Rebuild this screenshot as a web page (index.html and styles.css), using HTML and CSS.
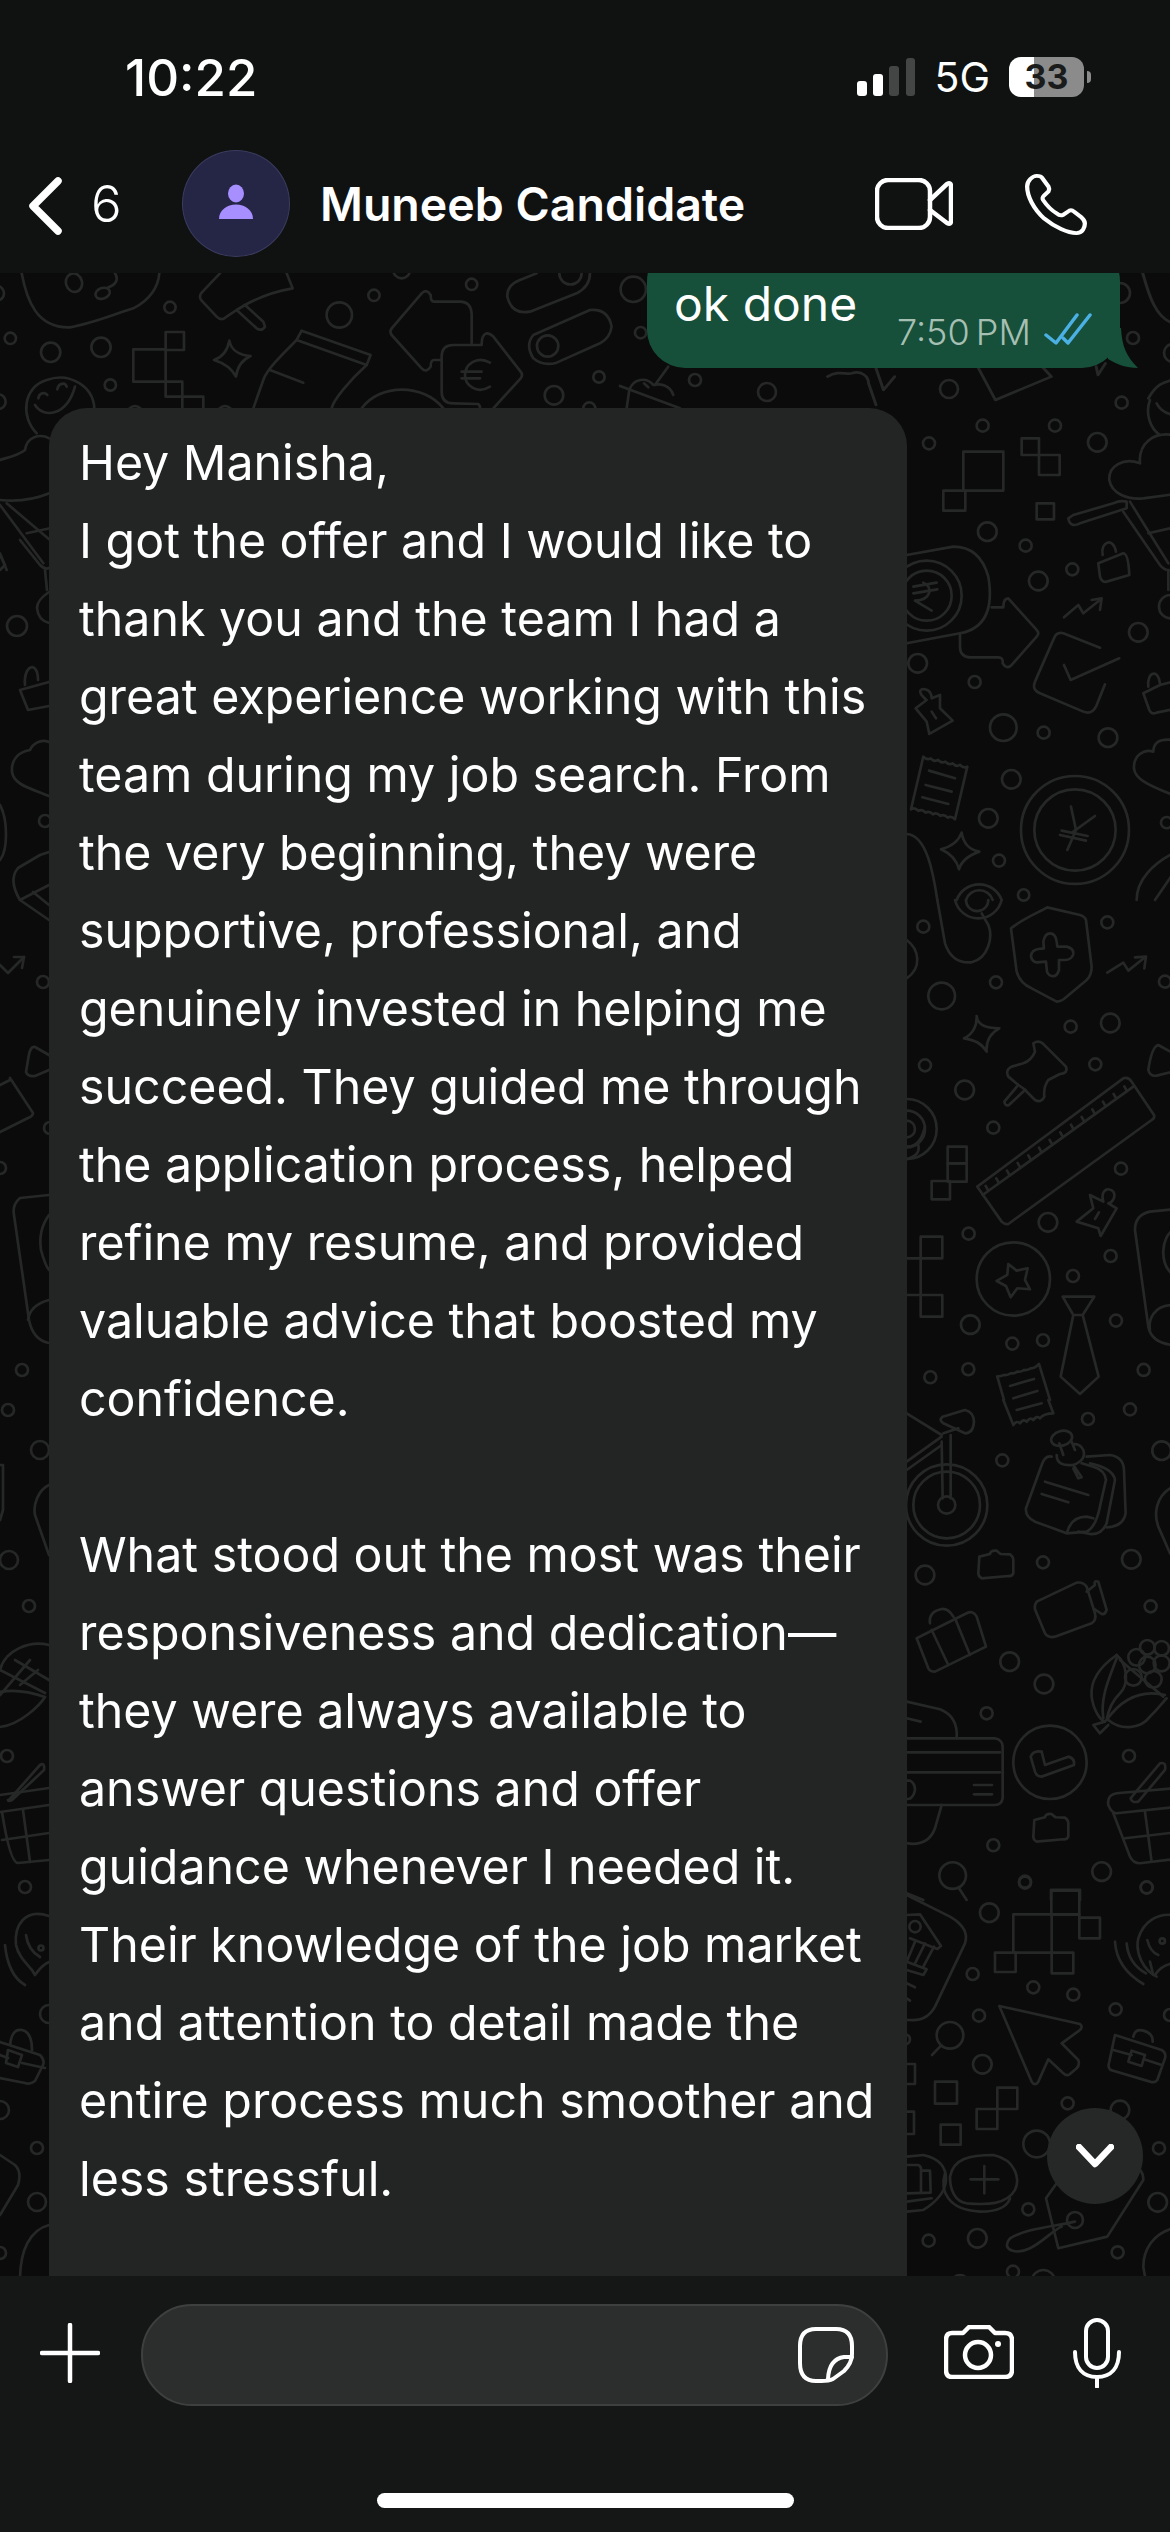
FILE: index.html
```html
<!DOCTYPE html>
<html lang="en">
<head>
<meta charset="utf-8">
<title>Muneeb Candidate</title>
<link rel="stylesheet" href="styles.css">
</head>
<body>
<div class="phone">
  <header class="top">
    <div class="status">
      <span class="clock">10:22</span>
      <div class="status-right">
        <svg class="signal" width="58" height="38" viewBox="0 0 58 38"><rect class="on" x="0" y="23" width="10" height="15" rx="3"/><rect class="on" x="16" y="16" width="10" height="22" rx="3"/><rect class="off" x="32" y="8" width="10" height="30" rx="3"/><rect class="off" x="49" y="0" width="9" height="38" rx="3"/></svg>
        <span class="net">5G</span>
        <div class="battery"><div class="battery-body"><span class="battery-level">33</span></div><span class="battery-nub"></span></div>
      </div>
    </div>
    <nav class="nav">
      <svg class="back" width="34" height="60" viewBox="0 0 34 60"><path d="M29 5 L4 30 L29 55"/></svg>
      <span class="count">6</span>
      <div class="avatar"><svg width="34" height="36" viewBox="0 0 34 36"><ellipse cx="17" cy="9.500" rx="8" ry="9"/><path d="M0 35 C0 26 8 20.500 17 20.500 C26 20.500 34 26 34 35 Z"/></svg></div>
      <span class="name">Muneeb Candidate</span>
      <svg class="video" width="78" height="52" viewBox="0 0 78 52"><rect x="2" y="2" width="53" height="48" rx="11"/><path d="M55 22 L72 6 Q76 4 76 8 L76 43 Q76 47 72 45 L55 32"/></svg>
      <svg class="call" width="62" height="62" viewBox="0 0 58 64" preserveAspectRatio="none"><path d="M11 3 C7 3 2 8 2 14 C2 24 8 37 18 47 C28 56 40 62 48 62 C54 62 56 56 56 52 C56 49 55 48 53 46 L46 40 C44 38 42 38 40 40 L36 43 C34 44 32 44 30 42 C24 38 20 33 17 28 C16 26 16 25 18 23 L22 19 C23 17 23 16 22 14 L16 5 C15 3 13 3 11 3 Z"/></svg>
    </nav>
  </header>

  <main class="chat">
    <svg class="wallpaper" width="1170" height="2007" viewBox="0 273 1170 2007" aria-hidden="true">
      <!-- top-left -->
      <g class="z3" transform="translate(0,270) scale(0.3333)">
        <path d="M65 10 C80 90 110 175 210 172 C280 160 350 130 400 115 C450 90 475 50 478 10"/>
        <ellipse cx="222" cy="38" rx="24" ry="28" transform="rotate(-15 222 38)"/>
        <ellipse cx="308" cy="70" rx="22" ry="16" transform="rotate(-20 308 70)"/>
        <path d="M345 10 C358 30 345 45 325 52"/>
        <circle cx="510" cy="112" r="17"/><circle cx="1018" cy="135" r="38"/><circle cx="1122" cy="76" r="17"/>
        <circle cx="31" cy="205" r="17"/><circle cx="152" cy="247" r="29"/><circle cx="303" cy="232" r="29"/><circle cx="331" cy="345" r="17"/>
        <circle cx="405" cy="430" r="22"/><circle cx="675" cy="430" r="22"/><circle cx="-5" cy="395" r="22"/><circle cx="-10" cy="70" r="22"/>
        <rect x="497" y="186" width="55" height="54"/><rect x="400" y="238" width="97" height="97"/><rect x="497" y="335" width="50" height="45"/><rect x="547" y="380" width="63" height="50"/>
        <path d="M688 212 C695 245 720 255 752 258 C725 270 712 290 708 320 C695 295 675 280 642 270 C665 262 682 245 688 212 Z"/>
        <path d="M660 10 L605 68 Q595 80 605 92 L650 140 Q665 155 680 140 L710 120 L770 175 Q785 185 795 170 L790 155 L735 105 L710 120"/>
        <path d="M735 105 C780 80 820 65 878 55 L860 10"/>
        <path d="M905 182 L1112 255 L1100 285 L890 210 Z"/>
        <path d="M890 210 C840 260 800 300 790 330 L760 415"/><path d="M810 300 L910 338"/><path d="M1100 285 C1050 330 1000 390 995 415"/>
        <path d="M110 490 C60 440 70 350 140 330 C210 305 280 350 283 415"/>
        <path d="M105 405 C130 445 200 440 225 350"/>
        <path d="M115 385 C118 368 135 365 142 375"/><path d="M172 358 C175 340 195 335 200 350"/>
        <path d="M148 505 C120 490 80 500 75 540 C50 560 10 565 0 570"/>
        <path d="M0 690 C50 695 100 690 148 670"/>
        <path d="M0 705 L130 880"/><path d="M20 700 L150 810"/><path d="M80 790 L150 775"/><path d="M0 850 L20 900"/>
      </g>
      <!-- top-middle -->
      <g class="z3" transform="translate(280,270) scale(0.3333)">
        <circle cx="575" cy="43" r="17"/><circle cx="1060" cy="58" r="38"/><circle cx="1082" cy="188" r="17"/><circle cx="957" cy="321" r="17"/><circle cx="822" cy="376" r="28"/><circle cx="928" cy="415" r="18"/><circle cx="365" cy="0" r="25"/>
        <path d="M575 220 L575 130 Q572 95 540 95 L462 95 Q452 95 452 75 Q440 55 425 70 L335 175 Q328 185 335 195 L425 295 Q440 310 452 290 Q452 270 462 270 L485 270"/>
        <path d="M605 225 L520 225 Q485 225 485 260 L485 365 Q485 400 520 400 L595 402 Q602 408 600 420"/>
        <path d="M605 222 Q605 195 620 190 Q632 190 640 200 L722 305 Q730 315 722 325 L640 415"/>
        <path d="M630 278 C590 255 555 285 555 315 C555 345 590 375 630 350"/><path d="M545 305 L605 305"/><path d="M545 325 L600 325"/>
        <path d="M770 10 L720 30 Q680 45 682 80 Q695 135 750 125 L890 70 Q930 50 930 10"/>
        <path d="M838 10 A32 32 0 0 0 905 10"/>
        <path d="M760 195 L930 120 Q985 115 995 170 Q990 205 960 220 L830 278 Q790 290 760 265 Q735 225 760 195 Z"/>
        <circle cx="803" cy="228" r="32"/>
        <path d="M245 415 C300 340 430 340 490 415"/>
        <path d="M1020 348 L1200 415"/><path d="M1040 415 L1048 360 C1060 325 1100 320 1120 345 C1140 340 1170 345 1180 375"/><path d="M1125 345 L1165 290"/><path d="M1092 340 L1105 352"/>
      </g>
      <!-- top-right -->
      <g class="z1">
        <circle cx="695" cy="380" r="6"/><circle cx="767" cy="392" r="9"/><circle cx="949" cy="389" r="9"/><circle cx="1133" cy="338" r="6"/><circle cx="1173" cy="353" r="9"/><circle cx="1120" cy="293" r="10"/>
      </g>
      <g class="z3" transform="translate(585,0) scale(0.3731,0.3333)">
        <path d="M650 1130 C680 1110 700 1125 715 1120 C740 1110 760 1130 760 1150 L780 1215"/>
        <path d="M780 1105 L800 1170 L830 1130"/>
        <path d="M1050 1095 L1100 1200 L1250 1130 L1225 1100"/>
        <path d="M1370 1100 L1375 1125 L1395 1090"/>
        <path d="M1510 1195 C1530 1155 1550 1145 1575 1140"/>
        <path d="M1495 820 C1510 880 1530 960 1580 970"/>
      </g>
      <!-- right column -->
      <g class="z3" transform="translate(860,400) scale(0.3333)">
        <circle cx="368" cy="77" r="18"/><circle cx="585" cy="77" r="18"/><circle cx="207" cy="130" r="18"/><circle cx="712" cy="127" r="28"/><circle cx="382" cy="395" r="28"/><circle cx="497" cy="437" r="18"/><circle cx="637" cy="508" r="18"/><circle cx="535" cy="543" r="28"/><circle cx="835" cy="697" r="28"/><circle cx="173" cy="790" r="28"/><circle cx="344" cy="846" r="18"/><circle cx="430" cy="983" r="40"/><circle cx="551" cy="998" r="18"/><circle cx="744" cy="1013" r="28"/><circle cx="454" cy="1138" r="28"/><circle cx="385" cy="1255" r="28"/><circle cx="417" cy="1382" r="18"/><circle cx="491" cy="1485" r="17"/><circle cx="785" cy="8" r="18"/><circle cx="920" cy="1268" r="17"/><circle cx="932" cy="620" r="35"/>
        <rect x="485" y="115" width="52" height="50"/><rect x="537" y="165" width="62" height="60"/><rect x="310" y="155" width="120" height="117"/><rect x="250" y="272" width="66" height="60"/><rect x="530" y="310" width="52" height="48"/>
        <path d="M940 105 C880 95 835 130 840 190 C790 170 745 200 748 240 C755 280 800 300 850 295 L940 283"/>
        <path d="M870 0 C855 40 870 85 900 105"/><path d="M890 10 C900 30 915 40 940 45"/>
        <path d="M625 355 Q630 385 660 370 L800 325 L800 305 Q780 300 760 310 L640 345 Z"/>
        <path d="M790 335 L900 495 Q915 515 940 510"/><path d="M810 305 L925 490"/><path d="M865 400 L930 385"/><path d="M925 510 L925 570"/>
        <path d="M715 490 L790 460 Q805 460 808 525 L740 545 Q725 548 720 530 Z"/><path d="M728 465 C720 425 760 410 768 455"/>
        <path d="M612 652 L655 615 L670 640 L720 600"/><path d="M695 600 L725 595 L720 630"/>
        <path d="M140 465 L280 440 Q360 440 385 530 Q410 680 300 700 L140 730"/>
        <circle cx="200" cy="587" r="105"/><circle cx="200" cy="587" r="75"/>
        <path d="M160 560 L230 548"/><path d="M160 580 L232 568"/><path d="M190 548 C220 560 215 600 165 602 L215 632"/>
        <path d="M395 622 L430 622 Q430 595 445 595 L530 690 Q540 700 530 710 L455 795 Q440 810 428 790 Q430 772 415 772 L330 772 Q300 770 300 740 L300 700"/>
        <path d="M720 743 L610 700 Q590 695 582 715 L525 845 Q515 870 540 880 L670 935 Q695 945 708 920 L735 853"/><path d="M612 795 L632 840 L778 775"/>
        <path d="M865 860 C860 815 895 805 900 850"/><path d="M940 845 L900 855 L850 880 L868 930 Q875 945 890 938 L940 928"/>
        <path d="M167 925 L200 900 C175 880 175 865 195 868 C210 870 215 885 215 895 L240 885 L240 925 L278 962 L208 1002 L200 965 Z"/><path d="M215 935 L228 955"/>
        <path d="M190 1070 q11 12 22 5 q11 12 22 5 q11 12 22 5 q11 12 22 5 q11 12 22 5 q11 12 22 5 L285 1258 q-11 -12 -22 -5 q-11 -12 -22 -5 q-11 -12 -22 -5 q-11 -12 -22 -5 q-11 -12 -22 -5 q-11 -12 -22 -5 Z"/>
        <path d="M207 1112 L285 1135"/><path d="M197 1155 L275 1175"/><path d="M187 1192 L265 1212"/>
        <circle cx="645" cy="1290" r="162"/><circle cx="645" cy="1290" r="122"/>
        <path d="M633 1220 L648 1290 L622 1350"/><path d="M705 1248 L640 1295"/><path d="M605 1292 L683 1308"/><path d="M600 1305 L678 1322"/>
        <path d="M305 1298 C310 1330 330 1350 358 1355 C330 1365 305 1380 297 1408 C290 1380 270 1360 243 1348 C275 1340 295 1325 305 1298 Z"/>
        <path d="M140 1302 C200 1305 220 1420 232 1500"/>
        <path d="M290 1500 A72 72 0 0 1 425 1500"/><path d="M318 1500 A42 42 0 0 1 398 1500"/>
        <path d="M940 1020 C895 1015 880 1030 880 1055 C850 1045 820 1070 822 1105 C825 1135 860 1155 940 1185"/>
        <path d="M940 1360 C880 1390 830 1440 830 1500"/><path d="M940 1420 L885 1500"/>
      </g>
      <g class="z3" transform="translate(860,900) scale(0.3333)">
        <circle cx="190" cy="80" r="18"/><circle cx="742" cy="67" r="18"/><circle cx="408" cy="247" r="18"/><circle cx="245" cy="288" r="40"/><circle cx="632" cy="380" r="18"/><circle cx="751" cy="369" r="28"/><circle cx="195" cy="496" r="18"/><circle cx="314" cy="570" r="28"/><circle cx="706" cy="493" r="18"/><circle cx="400" cy="683" r="18"/><circle cx="783" cy="806" r="18"/><circle cx="564" cy="967" r="28"/><circle cx="326" cy="1001" r="18"/><circle cx="752" cy="1068" r="18"/><circle cx="639" cy="1128" r="18"/><circle cx="768" cy="1262" r="18"/><circle cx="331" cy="1274" r="28"/><circle cx="457" cy="1331" r="18"/><circle cx="549" cy="1321" r="18"/><circle cx="325" cy="1408" r="18"/><circle cx="211" cy="1432" r="18"/><circle cx="851" cy="1410" r="18"/><circle cx="915" cy="245" r="18"/>
        <path d="M232 0 L255 130 C270 175 300 190 335 187 C385 175 400 110 385 75 L365 40"/>
        <path d="M285 0 A72 72 0 0 0 425 0"/><path d="M318 0 A32 32 0 0 0 385 0"/>
        <path d="M140 120 C180 150 185 205 140 235"/>
        <path d="M562 22 C530 40 490 55 453 85 L470 215 Q480 250 515 265 L590 305 Q605 305 620 290 L680 240 Q695 225 695 200 L678 60 Q675 50 660 45 Z"/>
        <path d="M550 125 Q555 100 570 100 Q587 100 590 125 L592 140 L620 140 Q642 145 640 162 Q635 180 615 180 L597 180 L597 210 Q590 232 575 228 Q560 225 560 205 L558 185 L530 187 Q515 185 513 168 Q515 150 535 147 L552 145 Z"/>
        <path d="M742 218 L790 188 L805 212 L855 172"/><path d="M825 172 L858 170 L853 205"/>
        <path d="M350 348 C352 375 375 385 418 385 C390 400 378 425 380 455 C365 430 345 420 312 415 C335 405 352 380 350 348 Z"/>
        <path d="M520 430 Q535 420 548 430 L618 500 Q625 520 600 522 L565 540 Q550 560 553 590 Q545 610 525 600 L495 570 L447 615 Q435 620 433 605 L475 555 L445 530 Q435 510 455 500 L490 490 Q515 480 525 455 Z"/><path d="M497 570 L475 555"/>
        <path d="M940 460 L895 435 Q875 440 865 510 Q870 530 890 527 L940 515"/>
        <circle cx="140" cy="687" r="90"/><circle cx="140" cy="687" r="55"/><circle cx="140" cy="687" r="25"/>
        <path d="M140 740 C180 740 190 700 195 680"/><path d="M175 735 C180 760 165 770 140 778"/>
        <rect x="263" y="740" width="57" height="50"/><rect x="263" y="790" width="57" height="55"/><rect x="215" y="843" width="55" height="55"/>
        <path d="M352 860 L790 535 Q805 530 815 545 L882 645 Q885 655 875 660 L445 972 Q435 975 425 965 Z"/>
        <path d="M368 885 L820 560"/>
        <path d="M385 872 l-8 -14 M417 849 l-8 -14 M449 826 l-8 -14 M481 803 l-8 -14 M513 780 l-8 -14 M545 757 l-8 -14 M577 734 l-8 -14 M609 711 l-8 -14 M641 688 l-8 -14 M673 665 l-8 -14 M705 642 l-8 -14 M737 619 l-8 -14 M769 596 l-8 -14 M801 573 l-8 -14"/>
        <path d="M650 965 L700 925 L690 885 L730 905 C720 870 745 860 760 875 C770 890 755 910 745 910 L770 925 L722 1008 L715 985 Z"/><path d="M705 957 L717 937"/>
        <path d="M940 928 L870 935 Q825 945 825 990 L865 1280 Q875 1330 940 1335"/><path d="M940 990 C905 1010 895 1090 940 1125"/><path d="M940 1215 C880 1215 865 1260 870 1290"/>
        <rect x="182" y="1010" width="65" height="65"/><rect x="182" y="1185" width="65" height="65"/><path d="M140 1075 L182 1075 L182 1185 L140 1185"/>
        <circle cx="460" cy="1137" r="110"/>
        <path d="M445 1092 L470 1112 L503 1105 L495 1140 L510 1168 L472 1165 L452 1192 L438 1158 L410 1143 L442 1125 Z"/>
        <path d="M608 1190 L703 1190 L668 1245 L640 1245 Z"/><path d="M640 1245 L602 1430 L660 1482 L716 1430 L668 1245"/>
        <path d="M412 1430 q11 -2 20 -5 q11 2 20 -5 q11 2 20 -5 q11 2 20 -5 q11 2 20 -5 q11 2 25 -13 L570 1500"/><path d="M412 1430 L432 1500"/><path d="M450 1458 L522 1437"/><path d="M460 1495 L532 1473"/>
      </g>
      <g class="z3" transform="translate(860,1400) scale(0.3333)">
        <circle cx="810" cy="28" r="18"/><circle cx="684" cy="57" r="18"/><circle cx="427" cy="181" r="18"/><circle cx="905" cy="152" r="28"/><circle cx="549" cy="487" r="18"/><circle cx="814" cy="478" r="28"/><circle cx="195" cy="525" r="28"/><circle cx="872" cy="619" r="18"/><circle cx="449" cy="785" r="28"/><circle cx="552" cy="852" r="28"/><circle cx="380" cy="940" r="18"/><circle cx="807" cy="1068" r="18"/><circle cx="400" cy="1336" r="18"/><circle cx="725" cy="1415" r="28"/><circle cx="495" cy="1445" r="18"/><circle cx="860" cy="1463" r="18"/>
        <path d="M430 0 L460 75 q11 -15 20 -5 q11 -15 20 -5 q11 -15 20 -5 q11 -15 20 -5 q11 -15 40 -15 L565 0"/><path d="M470 30 L545 10"/>
        <circle cx="260" cy="315" r="122"/><circle cx="260" cy="315" r="100"/><circle cx="260" cy="315" r="26"/>
        <path d="M272 295 L272 105"/><path d="M248 295 L245 125"/><path d="M140 40 L245 105"/><path d="M140 185 L245 110"/><path d="M140 210 L245 135"/>
        <path d="M248 50 L315 30 Q340 35 342 65 Q340 100 315 100 L250 70 Q235 60 248 50 Z"/><path d="M250 100 L295 85"/>
        <path d="M680 170 L750 165 Q790 170 792 210 L797 340 Q790 380 740 382"/>
        <path d="M690 190 Q760 205 765 240 L740 370 Q725 405 690 402 L655 395"/>
        <path d="M575 170 Q555 165 545 195 L498 325 Q495 350 525 365 L620 400 L680 395 Q710 380 722 310 L738 240 Q735 210 700 200 L665 190"/>
        <path d="M622 395 Q635 350 680 350 L700 355"/><path d="M555 245 L685 285"/><path d="M545 282 L625 307"/>
        <ellipse cx="605" cy="115" rx="32" ry="22" transform="rotate(-15 605 115)"/><path d="M598 130 L610 165"/><path d="M635 125 L645 150"/>
        <path d="M590 165 Q590 200 640 195 Q680 180 670 150 Q660 130 640 133"/><path d="M640 195 L665 232 L655 235 L640 205"/>
        <path d="M358 470 L390 462 Q392 450 410 452 Q418 460 422 462 L450 463 Q460 470 460 480 L460 520 Q455 530 445 528 L365 535 Q355 530 355 520 Z"/>
        <path transform="translate(165,790)" d="M358 470 L390 462 Q392 450 410 452 Q418 460 422 462 L450 463 Q460 470 460 480 L460 520 Q455 530 445 528 L365 535 Q355 530 355 520 Z"/>
        <path d="M930 265 C890 290 880 340 895 380 L930 460"/>
        <path d="M530 605 Q520 620 528 635 L555 700 Q565 715 585 710 L695 670 Q710 660 705 640 L680 560 Q670 545 650 548 Z"/>
        <path d="M680 575 L705 555 Q700 540 715 545 L740 630 Q735 645 725 642 L700 625"/>
        <path d="M170 715 L320 640 Q340 630 350 650 L378 740 L225 815 Q210 815 205 805 Z"/><path d="M215 690 L265 795"/><path d="M285 655 L330 765"/><path d="M210 670 Q205 635 245 627 Q265 625 280 650"/>
        <path d="M770 765 C720 800 690 840 695 890 C700 930 720 960 735 965"/><path d="M770 765 C800 790 810 850 780 880 C760 900 745 930 740 960"/>
        <path d="M735 965 L700 975 L720 1000 L745 975"/><path d="M745 960 C780 990 840 990 870 950 C895 925 910 905 920 895"/><path d="M740 960 C790 890 850 870 915 885"/><path d="M730 955 C720 890 750 830 770 775"/><path d="M780 780 L910 890"/>
        <circle cx="830" cy="772" r="25"/><circle cx="862" cy="742" r="22"/><circle cx="905" cy="745" r="22"/><circle cx="905" cy="790" r="24"/><circle cx="862" cy="795" r="25"/><circle cx="820" cy="832" r="25"/><circle cx="880" cy="838" r="25"/>
        <path d="M140 1015 L405 1015 Q428 1020 428 1040 L428 1195 Q425 1215 405 1215 L140 1215"/><path d="M140 1057 L420 1057"/><path d="M140 1117 L420 1117"/><path d="M342 1155 L396 1155"/><path d="M342 1183 L396 1183"/><path d="M140 1142 L150 1142 Q165 1150 165 1170 Q160 1195 145 1197 L140 1197"/>
        <path d="M140 905 L240 928 Q295 950 290 1015"/><path d="M140 955 L182 965"/><path d="M245 1215 L225 1285 Q205 1340 140 1330"/>
        <circle cx="570" cy="1087" r="110"/>
        <path d="M512 1070 Q520 1050 545 1055 L555 1095 L625 1070 Q645 1075 642 1095 L545 1130 Q530 1130 525 1115 Z"/>
        <path d="M940 1165 L770 1180 Q740 1185 745 1215 Q755 1240 770 1240 L940 1222"/><path d="M760 1240 L810 1370 Q820 1390 840 1390 L940 1378"/><path d="M795 1315 L940 1298"/><path d="M855 1235 L875 1385"/>
        <path d="M820 1185 L900 1090 Q920 1085 915 1110 L835 1205 Q815 1210 812 1195 Z"/>
        <circle cx="278" cy="1427" r="40"/><path d="M295 1462 L320 1500"/>
        <path d="M573 1500 L573 1470 L660 1470 L660 1500"/><path d="M140 1480 L190 1500"/>
      </g>
      <g class="z3" transform="translate(860,1880) scale(0.3333)">
        <circle cx="495" cy="8" r="18"/><circle cx="860" cy="22" r="18"/><circle cx="388" cy="98" r="28"/><circle cx="338" cy="282" r="18"/><circle cx="520" cy="322" r="18"/><circle cx="640" cy="344" r="18"/><circle cx="767" cy="388" r="18"/><circle cx="357" cy="407" r="18"/><circle cx="367" cy="553" r="28"/><circle cx="623" cy="670" r="18"/><circle cx="780" cy="690" r="28"/><circle cx="530" cy="792" r="40"/><circle cx="897" cy="805" r="18"/><circle cx="505" cy="988" r="18"/><circle cx="893" cy="967" r="28"/><circle cx="352" cy="1075" r="28"/><circle cx="206" cy="1082" r="18"/><circle cx="773" cy="1117" r="18"/><circle cx="459" cy="1175" r="18"/><circle cx="930" cy="405" r="18"/><circle cx="135" cy="478" r="15"/><circle cx="300" cy="1210" r="25"/><circle cx="550" cy="1205" r="35"/>
        <rect x="574" y="32" width="84" height="72"/><rect x="658" y="113" width="62" height="62"/><rect x="405" y="218" width="62" height="58"/><rect x="575" y="218" width="65" height="62"/><path d="M575 103 L460 103 L460 218 L575 218 L575 103 L658 103 L658 113"/>
        <path d="M140 45 L270 110 Q330 145 315 190 L225 380 Q200 425 150 420 L140 420"/>
        <path d="M140 105 L180 103 L243 198 L232 207 L150 175"/><circle cx="165" cy="140" r="17"/><path d="M165 185 L140 245"/><path d="M195 190 L165 250"/><path d="M222 200 L190 260"/><path d="M140 245 L200 268 L190 285 L140 270"/><path d="M140 310 L165 322"/><path d="M140 355 L150 362"/>
        <circle cx="270" cy="466" r="40"/><path d="M243 497 L216 525"/>
        <rect x="225" y="605" width="66" height="66"/><rect x="350" y="687" width="62" height="60"/><rect x="412" y="623" width="60" height="64"/><rect x="242" y="734" width="60" height="60"/>
        <path d="M140 552 L165 552 L165 612 L140 612"/><path d="M140 695 L162 695 L162 762 L140 762"/>
        <path d="M418 378 L660 432 Q670 440 660 450 L605 490 L655 540 Q660 555 650 565 L630 582 Q620 590 610 580 L565 538 L535 605 Q525 620 515 605 Z"/>
        <path d="M765 465 L905 510 Q920 520 915 535 L892 600 Q885 610 870 605 L752 570 Q742 560 748 545 Z"/><path d="M760 510 L815 525"/><path d="M852 538 L905 555"/><path d="M815 512 L855 525 L845 558 L805 545 Z"/><path d="M820 470 Q825 445 850 452 Q880 460 878 485"/>
        <path d="M890 290 C850 270 825 220 835 175 C850 125 890 100 940 105"/><path d="M880 285 L870 245"/><path d="M885 285 Q905 255 940 250"/><path d="M862 180 Q870 215 895 225"/><circle cx="907" cy="183" r="8"/><path d="M765 185 Q770 265 850 312"/><path d="M800 190 Q805 250 858 280"/>
        <path d="M140 830 L190 825 Q260 840 258 900 Q255 950 190 990 L140 995"/>
        <path d="M270 890 C280 835 330 825 400 825 C470 840 480 900 465 930 C440 975 380 975 320 970 C285 965 270 930 270 890 Z"/>
        <path d="M255 880 C240 930 260 990 360 995 C400 995 440 985 450 955"/><path d="M332 898 L415 898"/><path d="M373 858 L373 940"/>
        <path d="M140 855 L175 855 Q185 860 183 872 L210 872 L212 938 L140 940"/><path d="M183 872 L183 938"/><path d="M140 965 L215 955"/>
        <path d="M590 910 L558 955 L595 1105 L742 1070 L850 900 Q850 880 840 870"/><circle cx="645" cy="1020" r="24"/>
        <path d="M645 1025 C580 1040 500 1045 450 1075 C420 1110 470 1125 510 1105 C550 1085 580 1050 605 1040"/>
        <path d="M940 1045 C880 1060 850 1110 850 1160 L855 1190"/>
      </g>
      <!-- left margin -->
      <g class="z1">
        <circle cx="17" cy="626" r="10"/><circle cx="45" cy="821" r="6"/><circle cx="43" cy="982" r="6"/><circle cx="22" cy="1370" r="6"/><circle cx="8" cy="1410" r="6"/><circle cx="0" cy="1168" r="6"/><circle cx="50" cy="1128" r="6"/>
        <path d="M25 685 C23 665 38 660 38 680"/><path d="M49 682 L20 690 L28 710 L49 706"/>
        <path d="M49 742 C40 738 32 745 30 750 C18 752 11 760 12 772 C14 785 30 788 49 796"/>
        <path d="M0 805 C8 820 8 850 0 860"/>
        <path d="M49 852 L40 855 L18 868 Q8 880 20 900 L49 920"/><path d="M20 900 L49 885"/><path d="M33 892 L49 905"/>
        <path d="M0 965 L8 973 L24 957"/><path d="M14 957 L24 957 L22 968"/>
        <path d="M49 1055 L35 1047 Q30 1045 28 1060 L26 1072 Q28 1077 35 1076 L49 1070"/>
        <path d="M10 1078 L33 1113 Q33 1116 28 1118 L0 1132"/><path d="M0 1085 L10 1080"/>
        <path d="M49 1195 L20 1198 Q12 1205 14 1215 L29 1320 Q33 1340 49 1343"/><path d="M49 1215 Q38 1230 41 1250 Q45 1265 49 1270"/><path d="M49 1300 Q30 1305 28 1320"/>
        <path d="M20 540 L40 565 Q45 570 49 568"/><path d="M49 592 Q37 600 37 608 Q38 620 49 623"/><path d="M45 570 L47 590"/><path d="M0 555 L5 565 L0 570"/>
        <circle cx="40" cy="1450" r="9"/><circle cx="9" cy="1560" r="9"/><circle cx="29" cy="1606" r="6"/><circle cx="7" cy="1756" r="6"/><circle cx="25" cy="1887" r="6"/><circle cx="0" cy="2110" r="9"/><circle cx="37" cy="2148" r="6"/><circle cx="37" cy="2202" r="9"/><circle cx="0" cy="2253" r="6"/><circle cx="49" cy="2014" r="9"/>
        <path d="M0 1465 L3 1465 L3 1510 L0 1520"/><path d="M49 1485 C38 1490 33 1505 35 1515 L49 1555"/>
        <path d="M0 1670 C5 1650 30 1640 49 1645"/><path d="M0 1670 L45 1693"/><path d="M0 1695 L30 1660"/><path d="M20 1685 L38 1670"/><path d="M15 1660 L49 1680"/><path d="M0 1727 C20 1725 40 1705 45 1697 C25 1690 10 1690 0 1692"/>
        <path d="M9 1800 L40 1765 Q45 1762 44 1770 L12 1800 Q8 1802 8 1800 Z"/>
        <path d="M0 1795 L49 1788"/><path d="M0 1812 L49 1805"/><path d="M2 1840 L49 1833"/><path d="M2 1812 Q10 1863 18 1863 L49 1860"/><path d="M23 1810 L30 1862"/>
        <path d="M49 1916 C25 1908 14 1925 16 1945 C18 1955 25 1962 32 1970 L35 1975 Q42 1965 49 1962"/><circle cx="41" cy="1948" r="2.500"/><path d="M26 1935 Q28 1950 40 1957"/><path d="M5 1945 Q8 1975 25 1985"/>
        <path d="M0 2042 L40 2055 Q45 2060 43 2065 L35 2081 Q30 2085 25 2083 L0 2078"/><path d="M10 2045 Q12 2028 22 2030 Q32 2032 32 2050"/><path d="M0 2055 L8 2058"/><path d="M22 2063 L45 2068"/><path d="M8 2050 L22 2055 L18 2067 L6 2063 Z"/>
        <path d="M0 2155 L15 2165 Q22 2172 18 2185 L0 2215"/><path d="M49 2225 C30 2230 20 2250 20 2280"/>
      </g>
    </svg>

    <div class="thread">
      <div class="sent">
        <span class="sent-text">ok done</span>
        <span class="meta">7:50 PM</span>
        <svg class="ticks" width="48" height="32" viewBox="0 0 48 32"><path d="M2 22 L12 30 L33 2"/><path d="M19 25 L24 30 L46 2"/></svg>
        <svg class="tail" width="30" height="40" viewBox="0 0 30 40"><path d="M0 0 L13 0 C14 18 18 28 30 40 C18 40 8 36 0 31 Z"/></svg>
      </div>
      <div class="received">
        <p>Hey Manisha,<br>I got the offer and I would like to<br>thank you and the team I had a<br>great experience working with this<br>team during my job search. From<br>the very beginning, they were<br>supportive, professional, and<br>genuinely invested in helping me<br>succeed. They guided me through<br>the application process, helped<br>refine my resume, and provided<br>valuable advice that boosted my<br>confidence.</p>
        <p>What stood out the most was their<br>responsiveness and dedication—<br>they were always available to<br>answer questions and offer<br>guidance whenever I needed it.<br>Their knowledge of the job market<br>and attention to detail made the<br>entire process much smoother and<br>less stressful.</p>
      </div>
    </div>
    <div class="scroll-down"><svg width="38" height="24" viewBox="0 0 38 24"><path d="M3 3 L19 20 L35 3"/></svg></div>
  </main>

  <footer class="bottom">
    <div class="composer">
      <svg class="plus" width="60" height="60" viewBox="0 0 60 60"><path d="M30 2 L30 58 M2 30 L58 30"/></svg>
      <div class="input">
        <svg class="sticker" width="56" height="56" viewBox="0 0 56 56"><path d="M18 2 L38 2 Q54 2 54 19 L54 27 Q54 36 46 44 L35 52 Q31 54 23 54 L18 54 Q2 54 2 36 L2 19 Q2 2 18 2 Z"/><path d="M54 30 L46 30 Q31 32 30 52"/></svg>
      </div>
      <svg class="camera" width="70" height="54" viewBox="0 0 70 54"><path d="M8 8 L19 8 L25 2 L45 2 L51 8 L61 8 Q68 8 68 15 L68 45 Q68 52 61 52 L8 52 Q2 52 2 45 L2 15 Q2 8 8 8 Z"/><circle cx="34" cy="30" r="13"/><circle class="dot" cx="54" cy="19" r="3"/></svg>
      <svg class="mic" width="48" height="70" viewBox="0 0 48 70"><rect x="13" y="2" width="22" height="48" rx="11"/><path d="M2 34 C2 50 10 59 24 59 C38 59 46 50 46 34"/><path d="M24 59 L24 69"/></svg>
    </div>
    <div class="home-bar"></div>
  </footer>
</div>
</body>
</html>
```
FILE: styles.css
```css
* { box-sizing: border-box; }
html, body { margin: 0; padding: 0; background: #101212; }
body { font-family: Inter, "Liberation Sans", sans-serif; color: #fff; }
.phone { width: 1170px; height: 2532px; display: flex; flex-direction: column; overflow: hidden; }

.top { height: 273px; background: #101212; flex: none; display: flex; flex-direction: column; }
.status { height: 152px; padding: 51px 79px 0 125px; display: flex; justify-content: space-between; align-items: flex-start; }
.clock { font-size: 51px; font-weight: 500; line-height: 54px; }
.status-right { display: flex; align-items: center; height: 46px; padding-top: 6px; }
.signal { flex: none; }
.signal .on { fill: #fff; }
.signal .off { fill: #444645; }
.net { font-size: 41px; line-height: 40px; margin-left: 19px; font-weight: 400; }
.battery { display: flex; align-items: center; margin-left: 19px; }
.battery-body { width: 75px; height: 40px; border-radius: 12px; display: flex; align-items: center; justify-content: center; background: linear-gradient(90deg, #fff 0 25px, #8b8b8b 25px 100%); }
.battery-level { font-size: 34px; line-height: 40px; font-weight: 700; color: #1a1b1b; }
.battery-nub { width: 4px; height: 12px; margin-left: 3px; background: #8b8b8b; border-radius: 0 6px 6px 0; }

.nav { flex: 1; display: flex; align-items: center; padding-left: 29px; padding-bottom: 16px; }
.back { flex: none; margin-top: 4px; }
.back path { fill: none; stroke: #fff; stroke-width: 7.500; stroke-linecap: round; stroke-linejoin: round; }
.count { font-size: 51px; font-weight: 300; margin-left: 28px; width: 30px; }
.avatar { width: 108px; height: 107px; border-radius: 50%; margin-left: 61px; background: #252546; border: 1px solid #3b3b5e; display: flex; align-items: center; justify-content: center; flex: none; }
.avatar svg { fill: #a78fff; margin-bottom: 3px; }
.name { font-size: 46.500px; font-weight: 600; margin-left: 30px; width: 555px; white-space: nowrap; }
.video, .call { flex: none; fill: none; stroke: #fff; stroke-linejoin: round; stroke-linecap: round; }
.video { stroke-width: 4.500; }
.call { stroke-width: 4; margin-left: 72px; }

.chat { position: relative; flex: 1; background: #0b0b0b; overflow: hidden; }
.wallpaper { position: absolute; left: 0; top: 0; fill: none; stroke: #262727; stroke-linecap: round; stroke-linejoin: round; }
.z3 { stroke-width: 8; }
.z1 { stroke-width: 2.700; }
.thread { position: relative; display: flex; flex-direction: column; margin-top: -30px; }
.sent { position: relative; align-self: flex-start; margin-left: 647px; width: 473px; height: 125px; background: #164f3a; border-radius: 38px; padding: 31px 0 0 27px; }
.sent-text { font-size: 48px; line-height: 60px; display: block; }
.meta { position: absolute; left: 250px; bottom: 14px; font-size: 36px; line-height: 44px; font-weight: 300; color: #a6bfb3; word-spacing: -4px; white-space: nowrap; }
.ticks { position: absolute; right: 28px; bottom: 23px; fill: none; stroke: #4bb0e3; stroke-width: 3.500; stroke-linecap: round; stroke-linejoin: round; }
.tail { position: absolute; right: -18px; bottom: 0; fill: #164f3a; }
.received { width: 858px; margin: 40px 0 0 49px; background: #232525; border-radius: 38px 38px 0 0; padding: 16px 20px 0 30px; font-size: 48.300px; line-height: 78px; white-space: nowrap; }
.received p { margin: 0 0 78px; }
.scroll-down { position: absolute; left: 1047px; top: 1835px; width: 96px; height: 96px; border-radius: 50%; background: #262828; display: flex; align-items: center; justify-content: center; }
.scroll-down svg { fill: none; stroke: #fff; stroke-width: 6.500; stroke-linecap: round; stroke-linejoin: round; }

.bottom { height: 256px; flex: none; background: #151717; display: flex; flex-direction: column; align-items: center; position: relative; z-index: 1; }
.composer { width: 100%; height: 129px; padding: 28px 0 0 40px; display: flex; align-items: flex-start; }
.plus { flex: none; margin-top: 19px; fill: none; stroke: #fff; stroke-width: 4.500; stroke-linecap: round; }
.input { width: 747px; height: 102px; margin-left: 41px; border-radius: 51px; background: #2c2e2e; border: 2px solid #3e4040; display: flex; align-items: center; justify-content: flex-end; padding-right: 32px; flex: none; }
.sticker, .camera, .mic { flex: none; fill: none; stroke: #fff; stroke-linecap: round; stroke-linejoin: round; }
.sticker { stroke-width: 4; }
.camera { stroke-width: 4.500; margin: 21px 0 0 56px; }
.camera .dot { fill: #fff; stroke: none; }
.mic { stroke-width: 4; margin: 14px 0 0 59px; }
.home-bar { width: 417px; height: 15px; border-radius: 8px; background: #fff; margin-top: 88px; }
```
